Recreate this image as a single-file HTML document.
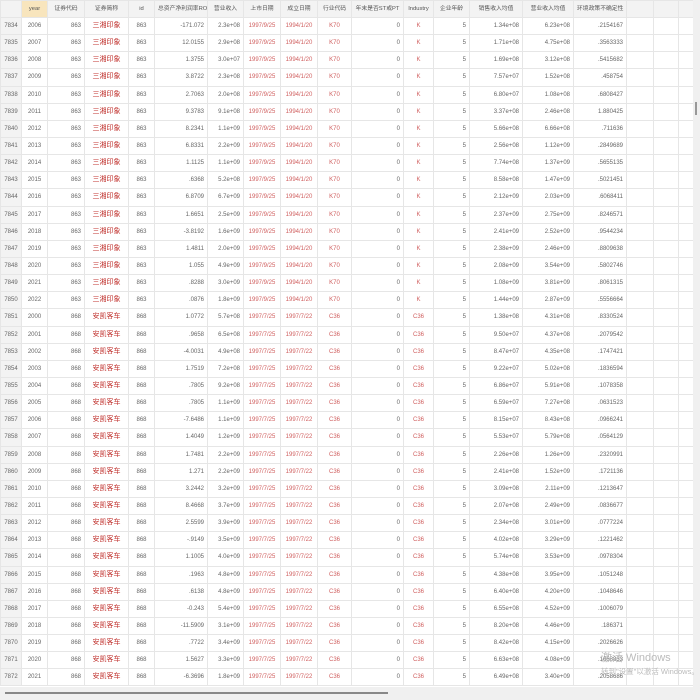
<!DOCTYPE html>
<html><head><meta charset="utf-8"><style>
*{margin:0;padding:0;box-sizing:border-box}
body{width:700px;height:700px;overflow:hidden;background:#f0f0f0;font-family:"Liberation Sans","Noto Sans CJK SC",sans-serif;font-size:6px;color:#666;position:relative}
#wrap{position:absolute;left:0;top:0;width:693px;height:687px;background:#fff;overflow:hidden}
table{border-collapse:collapse;table-layout:fixed;width:693px}
td,th{border:1px solid #e6e6e6;height:17.15px;padding:0 3px;white-space:nowrap;overflow:hidden;text-align:right;font-weight:normal;line-height:8px;vertical-align:middle}
th{height:17px;background:#f3f3f3;text-align:center;color:#555;font-size:5.8px}
th.y{background:#f8e5bd}
td.n{background:#f3f3f3;text-align:center}
td.c{text-align:center}
.r{color:#c0302c;text-align:center;font-size:7px}
.p{color:#d06060;text-align:center}
#vs{position:absolute;left:693px;top:0;width:7px;height:687px;background:#f0f0f0}
#vt{position:absolute;left:695px;top:102px;width:2px;height:13px;background:#999}
#hs{position:absolute;left:5px;top:692px;width:383px;height:2px;background:#888}
.wm{position:absolute;color:#bbb;font-size:11px;white-space:nowrap}
</style></head><body>
<div id="wrap"><table>
<colgroup><col style="width:21px"><col style="width:26px"><col style="width:37px"><col style="width:44px"><col style="width:26px"><col style="width:53px"><col style="width:36px"><col style="width:37px"><col style="width:37px"><col style="width:34px"><col style="width:52px"><col style="width:30px"><col style="width:36px"><col style="width:53px"><col style="width:51px"><col style="width:53px"><col style="width:27px"><col style="width:25px"><col style="width:15px"></colgroup>
<tr><th></th><th class="y">year</th><th>证券代码</th><th>证券简称</th><th>id</th><th>总资产净利润率ROA</th><th>营业收入</th><th>上市日期</th><th>成立日期</th><th>行业代码</th><th>年末是否ST或PT</th><th>Industry</th><th>企业年龄</th><th>销售收入均值</th><th>营业收入均值</th><th>环境政策不确定性</th><th></th><th></th><th></th></tr>
<tr><td class="n">7834</td><td class="c">2006</td><td>863</td><td class="r">三湘印象</td><td class="c">863</td><td>-171.072</td><td>2.3e+08</td><td class="p">1997/9/25</td><td class="p">1994/1/20</td><td class="p">K70</td><td>0</td><td class="p">K</td><td>5</td><td>1.34e+08</td><td>6.23e+08</td><td>.2154167</td><td></td><td></td><td></td></tr>
<tr><td class="n">7835</td><td class="c">2007</td><td>863</td><td class="r">三湘印象</td><td class="c">863</td><td>12.0155</td><td>2.9e+08</td><td class="p">1997/9/25</td><td class="p">1994/1/20</td><td class="p">K70</td><td>0</td><td class="p">K</td><td>5</td><td>1.71e+08</td><td>4.75e+08</td><td>.3563333</td><td></td><td></td><td></td></tr>
<tr><td class="n">7836</td><td class="c">2008</td><td>863</td><td class="r">三湘印象</td><td class="c">863</td><td>1.3755</td><td>3.0e+07</td><td class="p">1997/9/25</td><td class="p">1994/1/20</td><td class="p">K70</td><td>0</td><td class="p">K</td><td>5</td><td>1.69e+08</td><td>3.12e+08</td><td>.5415682</td><td></td><td></td><td></td></tr>
<tr><td class="n">7837</td><td class="c">2009</td><td>863</td><td class="r">三湘印象</td><td class="c">863</td><td>3.8722</td><td>2.3e+08</td><td class="p">1997/9/25</td><td class="p">1994/1/20</td><td class="p">K70</td><td>0</td><td class="p">K</td><td>5</td><td>7.57e+07</td><td>1.52e+08</td><td>.458754</td><td></td><td></td><td></td></tr>
<tr><td class="n">7838</td><td class="c">2010</td><td>863</td><td class="r">三湘印象</td><td class="c">863</td><td>2.7063</td><td>2.0e+08</td><td class="p">1997/9/25</td><td class="p">1994/1/20</td><td class="p">K70</td><td>0</td><td class="p">K</td><td>5</td><td>6.80e+07</td><td>1.08e+08</td><td>.6808427</td><td></td><td></td><td></td></tr>
<tr><td class="n">7839</td><td class="c">2011</td><td>863</td><td class="r">三湘印象</td><td class="c">863</td><td>9.3783</td><td>9.1e+08</td><td class="p">1997/9/25</td><td class="p">1994/1/20</td><td class="p">K70</td><td>0</td><td class="p">K</td><td>5</td><td>3.37e+08</td><td>2.46e+08</td><td>1.880425</td><td></td><td></td><td></td></tr>
<tr><td class="n">7840</td><td class="c">2012</td><td>863</td><td class="r">三湘印象</td><td class="c">863</td><td>8.2341</td><td>1.1e+09</td><td class="p">1997/9/25</td><td class="p">1994/1/20</td><td class="p">K70</td><td>0</td><td class="p">K</td><td>5</td><td>5.66e+08</td><td>6.66e+08</td><td>.711636</td><td></td><td></td><td></td></tr>
<tr><td class="n">7841</td><td class="c">2013</td><td>863</td><td class="r">三湘印象</td><td class="c">863</td><td>6.8331</td><td>2.2e+09</td><td class="p">1997/9/25</td><td class="p">1994/1/20</td><td class="p">K70</td><td>0</td><td class="p">K</td><td>5</td><td>2.56e+08</td><td>1.12e+09</td><td>.2849689</td><td></td><td></td><td></td></tr>
<tr><td class="n">7842</td><td class="c">2014</td><td>863</td><td class="r">三湘印象</td><td class="c">863</td><td>1.1125</td><td>1.1e+09</td><td class="p">1997/9/25</td><td class="p">1994/1/20</td><td class="p">K70</td><td>0</td><td class="p">K</td><td>5</td><td>7.74e+08</td><td>1.37e+09</td><td>.5655135</td><td></td><td></td><td></td></tr>
<tr><td class="n">7843</td><td class="c">2015</td><td>863</td><td class="r">三湘印象</td><td class="c">863</td><td>.6368</td><td>5.2e+08</td><td class="p">1997/9/25</td><td class="p">1994/1/20</td><td class="p">K70</td><td>0</td><td class="p">K</td><td>5</td><td>8.58e+08</td><td>1.47e+09</td><td>.5021451</td><td></td><td></td><td></td></tr>
<tr><td class="n">7844</td><td class="c">2016</td><td>863</td><td class="r">三湘印象</td><td class="c">863</td><td>6.8709</td><td>6.7e+09</td><td class="p">1997/9/25</td><td class="p">1994/1/20</td><td class="p">K70</td><td>0</td><td class="p">K</td><td>5</td><td>2.12e+09</td><td>2.03e+09</td><td>.6068411</td><td></td><td></td><td></td></tr>
<tr><td class="n">7845</td><td class="c">2017</td><td>863</td><td class="r">三湘印象</td><td class="c">863</td><td>1.6651</td><td>2.5e+09</td><td class="p">1997/9/25</td><td class="p">1994/1/20</td><td class="p">K70</td><td>0</td><td class="p">K</td><td>5</td><td>2.37e+09</td><td>2.75e+09</td><td>.8246571</td><td></td><td></td><td></td></tr>
<tr><td class="n">7846</td><td class="c">2018</td><td>863</td><td class="r">三湘印象</td><td class="c">863</td><td>-3.8192</td><td>1.6e+09</td><td class="p">1997/9/25</td><td class="p">1994/1/20</td><td class="p">K70</td><td>0</td><td class="p">K</td><td>5</td><td>2.41e+09</td><td>2.52e+09</td><td>.9544234</td><td></td><td></td><td></td></tr>
<tr><td class="n">7847</td><td class="c">2019</td><td>863</td><td class="r">三湘印象</td><td class="c">863</td><td>1.4811</td><td>2.0e+09</td><td class="p">1997/9/25</td><td class="p">1994/1/20</td><td class="p">K70</td><td>0</td><td class="p">K</td><td>5</td><td>2.38e+09</td><td>2.46e+09</td><td>.8809638</td><td></td><td></td><td></td></tr>
<tr><td class="n">7848</td><td class="c">2020</td><td>863</td><td class="r">三湘印象</td><td class="c">863</td><td>1.055</td><td>4.9e+09</td><td class="p">1997/9/25</td><td class="p">1994/1/20</td><td class="p">K70</td><td>0</td><td class="p">K</td><td>5</td><td>2.08e+09</td><td>3.54e+09</td><td>.5802746</td><td></td><td></td><td></td></tr>
<tr><td class="n">7849</td><td class="c">2021</td><td>863</td><td class="r">三湘印象</td><td class="c">863</td><td>.8288</td><td>3.0e+09</td><td class="p">1997/9/25</td><td class="p">1994/1/20</td><td class="p">K70</td><td>0</td><td class="p">K</td><td>5</td><td>1.08e+09</td><td>3.81e+09</td><td>.8061315</td><td></td><td></td><td></td></tr>
<tr><td class="n">7850</td><td class="c">2022</td><td>863</td><td class="r">三湘印象</td><td class="c">863</td><td>.0876</td><td>1.8e+09</td><td class="p">1997/9/25</td><td class="p">1994/1/20</td><td class="p">K70</td><td>0</td><td class="p">K</td><td>5</td><td>1.44e+09</td><td>2.87e+09</td><td>.5556664</td><td></td><td></td><td></td></tr>
<tr><td class="n">7851</td><td class="c">2000</td><td>868</td><td class="r">安凯客车</td><td class="c">868</td><td>1.0772</td><td>5.7e+08</td><td class="p">1997/7/25</td><td class="p">1997/7/22</td><td class="p">C36</td><td>0</td><td class="p">C36</td><td>5</td><td>1.38e+08</td><td>4.31e+08</td><td>.8330524</td><td></td><td></td><td></td></tr>
<tr><td class="n">7852</td><td class="c">2001</td><td>868</td><td class="r">安凯客车</td><td class="c">868</td><td>.9658</td><td>6.5e+08</td><td class="p">1997/7/25</td><td class="p">1997/7/22</td><td class="p">C36</td><td>0</td><td class="p">C36</td><td>5</td><td>9.50e+07</td><td>4.37e+08</td><td>.2079542</td><td></td><td></td><td></td></tr>
<tr><td class="n">7853</td><td class="c">2002</td><td>868</td><td class="r">安凯客车</td><td class="c">868</td><td>-4.0031</td><td>4.9e+08</td><td class="p">1997/7/25</td><td class="p">1997/7/22</td><td class="p">C36</td><td>0</td><td class="p">C36</td><td>5</td><td>8.47e+07</td><td>4.35e+08</td><td>.1747421</td><td></td><td></td><td></td></tr>
<tr><td class="n">7854</td><td class="c">2003</td><td>868</td><td class="r">安凯客车</td><td class="c">868</td><td>1.7519</td><td>7.2e+08</td><td class="p">1997/7/25</td><td class="p">1997/7/22</td><td class="p">C36</td><td>0</td><td class="p">C36</td><td>5</td><td>9.22e+07</td><td>5.02e+08</td><td>.1836594</td><td></td><td></td><td></td></tr>
<tr><td class="n">7855</td><td class="c">2004</td><td>868</td><td class="r">安凯客车</td><td class="c">868</td><td>.7805</td><td>9.2e+08</td><td class="p">1997/7/25</td><td class="p">1997/7/22</td><td class="p">C36</td><td>0</td><td class="p">C36</td><td>5</td><td>6.86e+07</td><td>5.91e+08</td><td>.1078358</td><td></td><td></td><td></td></tr>
<tr><td class="n">7856</td><td class="c">2005</td><td>868</td><td class="r">安凯客车</td><td class="c">868</td><td>.7805</td><td>1.1e+09</td><td class="p">1997/7/25</td><td class="p">1997/7/22</td><td class="p">C36</td><td>0</td><td class="p">C36</td><td>5</td><td>6.59e+07</td><td>7.27e+08</td><td>.0631523</td><td></td><td></td><td></td></tr>
<tr><td class="n">7857</td><td class="c">2006</td><td>868</td><td class="r">安凯客车</td><td class="c">868</td><td>-7.6486</td><td>1.1e+09</td><td class="p">1997/7/25</td><td class="p">1997/7/22</td><td class="p">C36</td><td>0</td><td class="p">C36</td><td>5</td><td>8.15e+07</td><td>8.43e+08</td><td>.0966241</td><td></td><td></td><td></td></tr>
<tr><td class="n">7858</td><td class="c">2007</td><td>868</td><td class="r">安凯客车</td><td class="c">868</td><td>1.4049</td><td>1.2e+09</td><td class="p">1997/7/25</td><td class="p">1997/7/22</td><td class="p">C36</td><td>0</td><td class="p">C36</td><td>5</td><td>5.53e+07</td><td>5.79e+08</td><td>.0564129</td><td></td><td></td><td></td></tr>
<tr><td class="n">7859</td><td class="c">2008</td><td>868</td><td class="r">安凯客车</td><td class="c">868</td><td>1.7481</td><td>2.2e+09</td><td class="p">1997/7/25</td><td class="p">1997/7/22</td><td class="p">C36</td><td>0</td><td class="p">C36</td><td>5</td><td>2.26e+08</td><td>1.26e+09</td><td>.2320991</td><td></td><td></td><td></td></tr>
<tr><td class="n">7860</td><td class="c">2009</td><td>868</td><td class="r">安凯客车</td><td class="c">868</td><td>1.271</td><td>2.2e+09</td><td class="p">1997/7/25</td><td class="p">1997/7/22</td><td class="p">C36</td><td>0</td><td class="p">C36</td><td>5</td><td>2.41e+08</td><td>1.52e+09</td><td>.1721136</td><td></td><td></td><td></td></tr>
<tr><td class="n">7861</td><td class="c">2010</td><td>868</td><td class="r">安凯客车</td><td class="c">868</td><td>3.2442</td><td>3.2e+09</td><td class="p">1997/7/25</td><td class="p">1997/7/22</td><td class="p">C36</td><td>0</td><td class="p">C36</td><td>5</td><td>3.09e+08</td><td>2.11e+09</td><td>.1213647</td><td></td><td></td><td></td></tr>
<tr><td class="n">7862</td><td class="c">2011</td><td>868</td><td class="r">安凯客车</td><td class="c">868</td><td>8.4668</td><td>3.7e+09</td><td class="p">1997/7/25</td><td class="p">1997/7/22</td><td class="p">C36</td><td>0</td><td class="p">C36</td><td>5</td><td>2.07e+08</td><td>2.49e+09</td><td>.0836677</td><td></td><td></td><td></td></tr>
<tr><td class="n">7863</td><td class="c">2012</td><td>868</td><td class="r">安凯客车</td><td class="c">868</td><td>2.5599</td><td>3.9e+09</td><td class="p">1997/7/25</td><td class="p">1997/7/22</td><td class="p">C36</td><td>0</td><td class="p">C36</td><td>5</td><td>2.34e+08</td><td>3.01e+09</td><td>.0777224</td><td></td><td></td><td></td></tr>
<tr><td class="n">7864</td><td class="c">2013</td><td>868</td><td class="r">安凯客车</td><td class="c">868</td><td>-.9149</td><td>3.5e+09</td><td class="p">1997/7/25</td><td class="p">1997/7/22</td><td class="p">C36</td><td>0</td><td class="p">C36</td><td>5</td><td>4.02e+08</td><td>3.29e+09</td><td>.1221462</td><td></td><td></td><td></td></tr>
<tr><td class="n">7865</td><td class="c">2014</td><td>868</td><td class="r">安凯客车</td><td class="c">868</td><td>1.1005</td><td>4.0e+09</td><td class="p">1997/7/25</td><td class="p">1997/7/22</td><td class="p">C36</td><td>0</td><td class="p">C36</td><td>5</td><td>5.74e+08</td><td>3.53e+09</td><td>.0978304</td><td></td><td></td><td></td></tr>
<tr><td class="n">7866</td><td class="c">2015</td><td>868</td><td class="r">安凯客车</td><td class="c">868</td><td>.1963</td><td>4.8e+09</td><td class="p">1997/7/25</td><td class="p">1997/7/22</td><td class="p">C36</td><td>0</td><td class="p">C36</td><td>5</td><td>4.38e+08</td><td>3.95e+09</td><td>.1051248</td><td></td><td></td><td></td></tr>
<tr><td class="n">7867</td><td class="c">2016</td><td>868</td><td class="r">安凯客车</td><td class="c">868</td><td>.6138</td><td>4.8e+09</td><td class="p">1997/7/25</td><td class="p">1997/7/22</td><td class="p">C36</td><td>0</td><td class="p">C36</td><td>5</td><td>6.40e+08</td><td>4.20e+09</td><td>.1048646</td><td></td><td></td><td></td></tr>
<tr><td class="n">7868</td><td class="c">2017</td><td>868</td><td class="r">安凯客车</td><td class="c">868</td><td>-0.243</td><td>5.4e+09</td><td class="p">1997/7/25</td><td class="p">1997/7/22</td><td class="p">C36</td><td>0</td><td class="p">C36</td><td>5</td><td>6.55e+08</td><td>4.52e+09</td><td>.1006079</td><td></td><td></td><td></td></tr>
<tr><td class="n">7869</td><td class="c">2018</td><td>868</td><td class="r">安凯客车</td><td class="c">868</td><td>-11.5909</td><td>3.1e+09</td><td class="p">1997/7/25</td><td class="p">1997/7/22</td><td class="p">C36</td><td>0</td><td class="p">C36</td><td>5</td><td>8.20e+08</td><td>4.46e+09</td><td>.186371</td><td></td><td></td><td></td></tr>
<tr><td class="n">7870</td><td class="c">2019</td><td>868</td><td class="r">安凯客车</td><td class="c">868</td><td>.7722</td><td>3.4e+09</td><td class="p">1997/7/25</td><td class="p">1997/7/22</td><td class="p">C36</td><td>0</td><td class="p">C36</td><td>5</td><td>8.42e+08</td><td>4.15e+09</td><td>.2026626</td><td></td><td></td><td></td></tr>
<tr><td class="n">7871</td><td class="c">2020</td><td>868</td><td class="r">安凯客车</td><td class="c">868</td><td>1.5627</td><td>3.3e+09</td><td class="p">1997/7/25</td><td class="p">1997/7/22</td><td class="p">C36</td><td>0</td><td class="p">C36</td><td>5</td><td>6.63e+08</td><td>4.08e+09</td><td>.1668833</td><td></td><td></td><td></td></tr>
<tr><td class="n">7872</td><td class="c">2021</td><td>868</td><td class="r">安凯客车</td><td class="c">868</td><td>-6.3696</td><td>1.8e+09</td><td class="p">1997/7/25</td><td class="p">1997/7/22</td><td class="p">C36</td><td>0</td><td class="p">C36</td><td>5</td><td>6.49e+08</td><td>3.40e+09</td><td>.2058686</td><td></td><td></td><td></td></tr>
</table></div>
<div id="vs"></div><div id="vt"></div><div id="hs"></div>
<div class="wm" style="left:601px;top:649px">激活 Windows</div>
<div class="wm" style="left:601px;top:666px;font-size:7.5px">转到"设置"以激活 Windows。</div>
</body></html>
